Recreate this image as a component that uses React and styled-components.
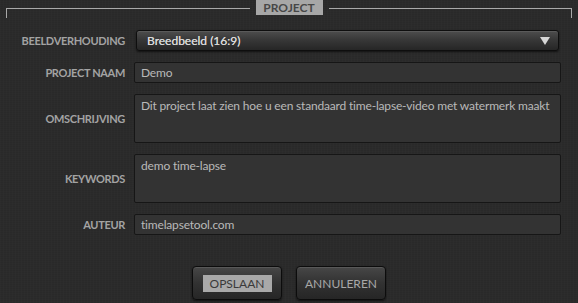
import React from 'react'
import styled, { createGlobalStyle } from 'styled-components'

const GlobalStyle = createGlobalStyle`
  html, body {
    margin: 0;
    padding: 0;
    background: #2b2b2b;
  }
  body {
    font-family: Lato, "Open Sans", sans-serif;
  }
`

const Page = styled.div`
  width: 578px;
  height: 303px;
  box-sizing: border-box;
  padding: 0 6px;
  background:
    repeating-linear-gradient(90deg, rgba(255,255,255,0.012) 0 1px, transparent 1px 3px),
    repeating-linear-gradient(0deg, rgba(0,0,0,0.05) 0 1px, transparent 1px 2px),
    #2b2b2b;
  overflow: hidden;
`

const Frame = styled.div`
  display: flex;
  align-items: flex-start;
  gap: 6px;
  height: 15px;
`

const FrameLine = styled.div`
  flex: 1;
  margin-top: 8px;
  height: 9px;
  border-top: 1px solid #a9a9a9;
  ${({ side }) => side === 'left' ? 'border-left: 1px solid #a9a9a9;' : 'border-right: 1px solid #a9a9a9;'}
`

const Legend = styled.div`
  width: 67px;
  height: 15px;
  background: #a7a7a7;
  color: #474747;
  font-size: 12px;
  font-weight: 700;
  line-height: 15px;
  text-align: center;
`

const Form = styled.form`
  display: grid;
  grid-template-columns: 113px 1fr;
  column-gap: 9px;
  row-gap: 11px;
  margin: 15px 11px 0 6px;
`

const Label = styled.label`
  align-self: center;
  justify-self: end;
  color: #a3a3a3;
  font-size: 11px;
  font-weight: 700;
  letter-spacing: -0.03em;
`

const Field = styled.div`
  box-sizing: border-box;
  height: ${({ tall }) => (tall ? '49px' : '21px')};
  padding: ${({ tall }) => (tall ? '3px 6px' : '0 6px')};
  display: flex;
  align-items: ${({ tall }) => (tall ? 'flex-start' : 'center')};
  background: #333333;
  border: 1px solid #161616;
  border-radius: 2px;
  color: #b9b9b9;
  font-size: 12px;
  letter-spacing: -0.015em;
  white-space: nowrap;
  overflow: hidden;
`

const Select = styled.div`
  box-sizing: border-box;
  height: 21px;
  margin: 0 2px;
  padding: 0 8px 0 10px;
  display: flex;
  align-items: center;
  justify-content: space-between;
  background: linear-gradient(#4d4d4d, #383838 45%, #262626);
  border: 1px solid #0e0e0e;
  border-radius: 3px;
  box-shadow: 0 1px 2px rgba(0, 0, 0, 0.6), inset 0 1px 0 rgba(255, 255, 255, 0.08);
  color: #d8d8d8;
  font-size: 12px;
  text-shadow: 0 0 0.4px #d8d8d8;
`

const Arrow = styled.span`
  width: 0;
  height: 0;
  border-left: 5px solid transparent;
  border-right: 5px solid transparent;
  border-top: 8px solid #d6d6d6;
`

const Buttons = styled.div`
  display: flex;
  justify-content: center;
  gap: 14px;
  margin-top: 31px;
`

const Button = styled.button`
  box-sizing: border-box;
  width: 90px;
  height: 34px;
  padding: 0;
  display: flex;
  align-items: center;
  justify-content: center;
  background: linear-gradient(#474747, #323232 50%, #262626);
  border: 1px solid #0c0c0c;
  border-radius: 4px;
  box-shadow: 0 1px 2px rgba(0, 0, 0, 0.6), inset 0 1px 0 rgba(255, 255, 255, 0.1);
  color: #a8a8a8;
  font-family: Lato, "Open Sans", sans-serif;
  font-size: 12px;
  cursor: pointer;
`

const Focus = styled.span`
  width: 69px;
  height: 17px;
  line-height: 17px;
  text-align: center;
  background: #a9a9a9;
  color: #3a3a3a;
`

const App = () => (
  <Page>
    <GlobalStyle />
    <Frame>
      <FrameLine side="left" />
      <Legend>PROJECT</Legend>
      <FrameLine side="right" />
    </Frame>
    <Form>
      <Label>BEELDVERHOUDING</Label>
      <Select>
        Breedbeeld (16:9)
        <Arrow />
      </Select>
      <Label>PROJECT NAAM</Label>
      <Field>Demo</Field>
      <Label>OMSCHRIJVING</Label>
      <Field tall>Dit project laat zien hoe u een standaard time-lapse-video met watermerk maakt</Field>
      <Label>KEYWORDS</Label>
      <Field tall>demo time-lapse</Field>
      <Label>AUTEUR</Label>
      <Field>timelapsetool.com</Field>
    </Form>
    <Buttons>
      <Button type="submit"><Focus>OPSLAAN</Focus></Button>
      <Button type="button">ANNULEREN</Button>
    </Buttons>
  </Page>
)

export default App
